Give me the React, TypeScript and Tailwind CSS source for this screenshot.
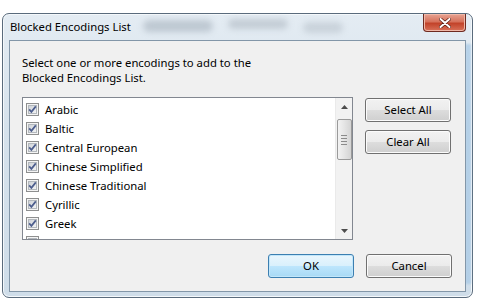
import React from 'react';

const encodings = [
  'Arabic',
  'Baltic',
  'Central European',
  'Chinese Simplified',
  'Chinese Traditional',
  'Cyrillic',
  'Greek',
  'Hebrew',
];

function CheckBox() {
  return (
    <svg width="13" height="13" viewBox="0 0 13 13" className="shrink-0">
      <defs>
        <linearGradient id="cbFill" x1="0" y1="0" x2="1" y2="1">
          <stop offset="0" stopColor="#cdd1d6" />
          <stop offset="1" stopColor="#f4f5f6" />
        </linearGradient>
      </defs>
      <rect x="0.5" y="0.5" width="12" height="12" fill="#f4f4f4" stroke="#8e8f8f" />
      <rect x="2.5" y="2.5" width="8" height="8" fill="url(#cbFill)" stroke="#b3b8bd" />
      <path d="M3.2 6.4 L5.4 8.9 L9.8 3.4" fill="none" stroke="#4c5d8d" strokeWidth="1.7" />
    </svg>
  );
}

function VistaButton({ label, primary }: { label: string; primary?: boolean }) {
  const face = primary
    ? 'border-[#3c7fb1] bg-[linear-gradient(#eaf6fd_0%,#d9f0fc_50%,#bee6fd_50%,#a7d9f5_100%)] shadow-[inset_0_0_0_1px_#c2e6fa]'
    : 'border-[#707070] bg-[linear-gradient(#f2f2f2_0%,#ebebeb_50%,#dddddd_50%,#cfcfcf_100%)] shadow-[inset_0_0_0_1px_#fbfbfb]';
  return (
    <div
      className={`flex h-[24px] w-[86px] items-center justify-center rounded-[3px] border text-[11.3px] text-black ${face}`}
    >
      {label}
    </div>
  );
}

function ScrollBar() {
  return (
    <div className="flex h-full w-[17px] shrink-0 flex-col items-center border-l border-[#eaeaea] bg-[#f2f2f2]">
      <div className="flex h-[17px] w-full items-center justify-center">
        <svg width="7" height="4" viewBox="0 0 7 4">
          <path d="M0 4 L3.5 0 L7 4 Z" fill="#4d4d4d" />
        </svg>
      </div>
      <div className="mt-[4px] flex h-[41px] w-[15px] flex-col items-center justify-center gap-[2px] rounded-[2px] border border-[#9a9a9a] bg-[linear-gradient(90deg,#f3f3f3,#e4e4e4_50%,#d4d4d4)]">
        <div className="h-px w-[6px] bg-[#8a8a8a]" />
        <div className="h-px w-[6px] bg-[#8a8a8a]" />
        <div className="h-px w-[6px] bg-[#8a8a8a]" />
        <div className="h-px w-[6px] bg-[#8a8a8a]" />
      </div>
      <div className="flex-1" />
      <div className="flex h-[17px] w-full items-center justify-center">
        <svg width="7" height="4" viewBox="0 0 7 4">
          <path d="M0 0 L3.5 4 L7 0 Z" fill="#4d4d4d" />
        </svg>
      </div>
    </div>
  );
}

export default function App() {
  return (
    <div
      className="h-[306px] w-[482px] bg-white pl-[2px] pt-[13px]"
      style={{ fontFamily: '"Noto Sans", "Open Sans", sans-serif' }}
    >
      <div className="relative flex h-[285px] w-[471px] flex-col rounded-[7px] border border-[#5a6b7c] bg-[linear-gradient(180deg,#e4ecf3_0%,#d6e2ec_40%,#cfdde9_100%)] shadow-[inset_0_0_0_1px_#f4f8fb]">
        {/* blurred glass behind title */}
        <div className="pointer-events-none absolute left-[140px] top-[6px] h-[12px] w-[70px] rounded-full bg-[#9aa6b2] opacity-50 blur-[3px]" />
        <div className="pointer-events-none absolute left-[225px] top-[5px] h-[10px] w-[60px] rounded-full bg-[#a4aeb8] opacity-50 blur-[3px]" />
        <div className="pointer-events-none absolute left-[300px] top-[8px] h-[11px] w-[40px] rounded-full bg-[#a4aeb8] opacity-40 blur-[3px]" />
        <div className="pointer-events-none absolute right-[1px] top-[30px] h-[240px] w-[6px] bg-[#a7c9e6] opacity-70 blur-[1px]" />

        <div className="relative flex h-[26px] items-center pl-[7px] pr-[6px]">
          <span className="text-[11.3px] text-black">Blocked Encodings List</span>
          <div className="ml-auto flex h-[18px] w-[43px] items-center justify-center self-start rounded-b-[4px] border border-t-0 border-[#6e2a20] bg-[linear-gradient(180deg,#e8a493_0%,#d6725c_45%,#c2432a_55%,#d9725a_100%)] shadow-[inset_0_0_0_1px_#f0b8a8]">
            <svg width="12" height="10" viewBox="0 0 12 10">
              <path d="M1.5 1 L10.5 9 M10.5 1 L1.5 9" stroke="#5a1b10" strokeWidth="3.4" strokeLinecap="round" />
              <path d="M1.5 1 L10.5 9 M10.5 1 L1.5 9" stroke="#ffffff" strokeWidth="2" strokeLinecap="round" />
            </svg>
          </div>
        </div>

        <div className="relative mx-[6px] mb-[5px] flex flex-1 flex-col border border-[#8296a8] bg-[#f0f0f0] pl-[12px] pr-[13px] pt-[14px] text-[11.3px] text-black">
          <p className="leading-[15px]">
            Select one or more encodings to add to the
            <br />
            Blocked Encodings List.
          </p>

          <div className="mt-[12px] flex gap-[12px]">
            <div className="flex h-[143px] w-[331px] border border-[#828790] bg-white">
              <div className="flex-1 overflow-hidden pl-[3px] pt-[2px]">
                {encodings.map((name) => (
                  <div key={name} className="flex h-[19px] items-center gap-[6px]">
                    <CheckBox />
                    <span className="leading-[19px]">{name}</span>
                  </div>
                ))}
              </div>
              <ScrollBar />
            </div>
            <div className="flex flex-col gap-[8px] pt-px">
              <VistaButton label="Select All" />
              <VistaButton label="Clear All" />
            </div>
          </div>

          <div className="mt-[14px] flex justify-end gap-[12px]">
            <VistaButton label="OK" primary />
            <VistaButton label="Cancel" />
          </div>
        </div>
      </div>
    </div>
  );
}
